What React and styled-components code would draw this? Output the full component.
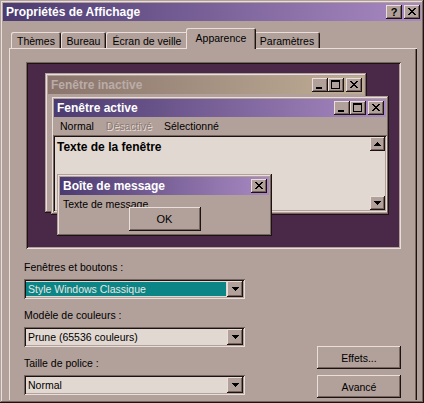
import React from 'react';
import styled, { createGlobalStyle } from 'styled-components';

const C = {
  face: '#b2a19b',
  hi: '#e9ded9',
  sh: '#75655f',
  dk: '#1c1212',
  win: '#e2d8d2',
  desk: '#4a2848',
  teal: '#0b8585',
};

const Global = createGlobalStyle`
  html, body { margin: 0; padding: 0; background: ${C.face}; overflow: hidden; }
  body { font-family: "Liberation Sans", Arial, sans-serif; font-size: 10.5px; color: #000; }
  * { box-sizing: border-box; }
`;

const bevelOut = `box-shadow: inset -1px -1px ${C.dk}, inset 1px 1px ${C.hi}, inset -2px -2px ${C.sh};`;
const frameOut = `box-shadow: inset -1px -1px ${C.dk}, inset 1px 1px ${C.face}, inset -2px -2px ${C.sh}, inset 2px 2px ${C.hi};`;
const sunken = `box-shadow: inset 1px 1px ${C.sh}, inset -1px -1px ${C.hi}, inset 2px 2px ${C.dk}, inset -2px -2px ${C.face};`;

const Dialog = styled.div`
  width: 424px;
  height: 403px;
  background: ${C.face};
  ${frameOut}
  padding: 3px;
  display: flex;
  flex-direction: column;
  overflow: hidden;
`;

const TitleBar = styled.div`
  height: ${p => p.$h || 18}px;
  flex: none;
  display: flex;
  align-items: center;
  padding: 0 ${p => p.$pr ?? 2}px 0 3px;
  background: ${p => p.$inactive
    ? 'linear-gradient(to right, #8a746c, #bfae96)'
    : 'linear-gradient(to right, #4b3b70, #a989c2)'};
  color: ${p => p.$inactive ? '#baaca8' : '#fff'};
  font-weight: bold;
  font-size: 12px;
  white-space: nowrap;
`;

const TitleText = styled.span`
  flex: 1;
  overflow: hidden;
`;

const CapBtn = styled.div`
  width: 16px;
  height: 14px;
  flex: none;
  background: ${C.face};
  ${bevelOut}
  margin-left: ${p => p.$gap || 0}px;
  display: flex;
  align-items: center;
  justify-content: center;
  color: #000;
  font-size: 11px;
  font-weight: bold;
  line-height: 1;
  svg { display: block; }
`;

const Glyph = ({ kind }) => {
  if (kind === 'min')
    return (
      <svg width="16" height="14" shapeRendering="crispEdges">
        <rect x="4" y="9" width="6" height="2" fill="#000" />
      </svg>
    );
  if (kind === 'max')
    return (
      <svg width="16" height="14" shapeRendering="crispEdges">
        <rect x="3.5" y="2.5" width="8" height="8" fill="none" stroke="#000" />
        <rect x="3" y="2" width="9" height="2" fill="#000" />
      </svg>
    );
  if (kind === 'close')
    return (
      <svg width="16" height="14" shapeRendering="crispEdges">
        <path d="M4 3h2v1h-2zM10 3h2v1h-2zM5 4h2v1h-2zM9 4h2v1h-2zM6 5h4v1h-4zM7 6h2v1h-2zM6 7h4v1h-4zM5 8h2v1h-2zM9 8h2v1h-2zM4 9h2v1h-2zM10 9h2v1h-2z" fill="#000" />
      </svg>
    );
  return null;
};

const Arrow = ({ up }) => (
  <svg width="7" height="4" shapeRendering="crispEdges">
    {up ? (
      <path d="M3 0h1v1h-1zM2 1h3v1h-3zM1 2h5v1h-5zM0 3h7v1h-7z" fill="#000" />
    ) : (
      <path d="M0 0h7v1h-7zM1 1h5v1h-5zM2 2h3v1h-3zM3 3h1v1h-1z" fill="#000" />
    )}
  </svg>
);

const Body = styled.div`
  flex: 1;
  display: flex;
  flex-direction: column;
  padding: 7px 4px 0 6px;
  min-height: 0;
`;

const TabRow = styled.div`
  display: flex;
  align-items: flex-end;
  height: 20px;
  padding-left: 2px;
  position: relative;
  z-index: 1;
`;

const Tab = styled.div`
  width: ${p => p.$w}px;
  height: ${p => (p.$active ? 21 : 16)}px;
  margin: ${p => (p.$active ? '0 -2px -1px -2px' : '0')};
  background: ${C.face};
  border-top-left-radius: 2px;
  border-top-right-radius: 2px;
  box-shadow: inset 1px 1px ${C.hi}, inset -1px 0 ${C.dk}, inset -2px 0 ${C.sh};
  display: flex;
  align-items: ${p => (p.$active ? 'flex-start' : 'center')};
  padding-top: ${p => (p.$active ? 4 : 1)}px;
  justify-content: center;
  white-space: nowrap;
  position: relative;
  z-index: ${p => (p.$active ? 2 : 1)};
`;

const Panel = styled.div`
  flex: 1;
  background: ${C.face};
  box-shadow: inset 1px 1px ${C.hi}, inset -1px 0 ${C.dk}, inset -2px 0 ${C.sh};
  padding: 14px 16px 0 15px;
  display: flex;
  flex-direction: column;
`;

const Preview = styled.div`
  height: 187px;
  margin: 0 0 0 2px;
  background: ${C.desk};
  ${sunken}
  position: relative;
  overflow: hidden;
`;

const Win = styled.div`
  position: absolute;
  left: ${p => p.$x}px;
  top: ${p => p.$y}px;
  width: ${p => p.$w}px;
  height: ${p => p.$h}px;
  background: ${C.face};
  ${frameOut}
  padding: 3px;
  display: flex;
  flex-direction: column;
`;

const MenuRow = styled.div`
  height: 18px;
  display: flex;
  align-items: center;
  flex: none;
`;

const MenuItem = styled.span`
  padding: 0 6px;
  color: ${p => (p.$disabled ? '#8a7a74' : '#000')};
  text-shadow: ${p => (p.$disabled ? `1px 1px ${C.hi}` : 'none')};
`;

const TextArea = styled.div`
  flex: 1;
  margin: 0 -1px;
  background: ${C.win};
  ${sunken}
  padding: 5px 4px;
  display: flex;
  font-weight: bold;
  font-size: 12px;
`;

const TextContent = styled.div`
  flex: 1;
`;

const ScrollBar = styled.div`
  width: 15px;
  display: flex;
  flex-direction: column;
  justify-content: space-between;
  margin: -3px -2px -3px 0;
`;

const ScrollBtn = styled.div`
  width: 15px;
  height: 14px;
  background: ${C.face};
  ${bevelOut}
  display: flex;
  align-items: center;
  justify-content: center;
`;

const MsgBody = styled.div`
  flex: 1;
  display: flex;
  flex-direction: column;
  padding: 3px 3px 0 3px;
`;

const MsgText = styled.div`
  height: 12px;
  line-height: 12px;
  white-space: nowrap;
`;

const PushBtn = styled.div`
  width: ${p => p.$w}px;
  height: ${p => p.$h}px;
  background: ${C.face};
  ${bevelOut}
  display: flex;
  align-items: center;
  justify-content: center;
  font-size: ${p => p.$fs || 10.5}px;
  position: relative;
  align-self: ${p => p.$center ? 'center' : 'auto'};
  margin-top: ${p => p.$mt || 0}px;
`;

const Form = styled.div`
  display: flex;
  justify-content: space-between;
  margin-top: 12px;
`;

const FieldCol = styled.div`
  width: 221px;
  display: flex;
  flex-direction: column;
`;

const Label = styled.div`
  height: 13px;
  line-height: 13px;
  margin-top: ${p => (p.$first ? 0 : 10)}px;
  margin-bottom: 5px;
`;

const Combo = styled.div`
  height: 20px;
  background: ${C.win};
  ${sunken}
  padding: 2px;
  display: flex;
`;

const ComboValue = styled.div`
  flex: 1;
  margin: 1px 1px 1px 0;
  padding-left: 2px;
  background: ${p => (p.$selected ? C.teal : 'transparent')};
  color: ${p => (p.$selected ? '#ece4e0' : '#000')};
  display: flex;
  align-items: center;
  white-space: nowrap;
`;

const DropBtn = styled.div`
  width: 16px;
  background: ${C.face};
  ${bevelOut}
  display: flex;
  align-items: center;
  justify-content: center;
`;

const BtnCol = styled.div`
  display: flex;
  flex-direction: column;
  gap: 6px;
  align-self: flex-end;
  margin-bottom: -3px;
`;

const Field = ({ label, value, selected, first }) => (
  <>
    <Label $first={first}>{label}</Label>
    <Combo>
      <ComboValue $selected={selected}>{value}</ComboValue>
      <DropBtn><Arrow /></DropBtn>
    </Combo>
  </>
);

export default function App() {
  return (
    <>
      <Global />
      <Dialog>
        <TitleBar $pr={1}>
          <TitleText>Propriétés de Affichage</TitleText>
          <CapBtn>?</CapBtn>
          <CapBtn $gap={2}><Glyph kind="close" /></CapBtn>
        </TitleBar>
        <Body>
          <TabRow>
            <Tab $w={50}>Thèmes</Tab>
            <Tab $w={45}>Bureau</Tab>
            <Tab $w={82}>Écran de veille</Tab>
            <Tab $w={70} $active>Apparence</Tab>
            <Tab $w={66}>Paramètres</Tab>
          </TabRow>
          <Panel>
            <Preview>
              <Win $x={19} $y={11} $w={322} $h={140}>
                <TitleBar $inactive>
                  <TitleText>Fenêtre inactive</TitleText>
                  <CapBtn><Glyph kind="min" /></CapBtn>
                  <CapBtn><Glyph kind="max" /></CapBtn>
                  <CapBtn $gap={2}><Glyph kind="close" /></CapBtn>
                </TitleBar>
              </Win>
              <Win $x={25} $y={34} $w={338} $h={119}>
                <TitleBar>
                  <TitleText>Fenêtre active</TitleText>
                  <CapBtn><Glyph kind="min" /></CapBtn>
                  <CapBtn><Glyph kind="max" /></CapBtn>
                  <CapBtn $gap={2}><Glyph kind="close" /></CapBtn>
                </TitleBar>
                <MenuRow>
                  <MenuItem>Normal</MenuItem>
                  <MenuItem $disabled>Désactivé</MenuItem>
                  <MenuItem>Sélectionné</MenuItem>
                </MenuRow>
                <TextArea>
                  <TextContent>Texte de la fenêtre</TextContent>
                  <ScrollBar>
                    <ScrollBtn><Arrow up /></ScrollBtn>
                    <ScrollBtn><Arrow /></ScrollBtn>
                  </ScrollBar>
                </TextArea>
              </Win>
              <Win $x={31} $y={112} $w={215} $h={62}>
                <TitleBar>
                  <TitleText>Boîte de message</TitleText>
                  <CapBtn><Glyph kind="close" /></CapBtn>
                </TitleBar>
                <MsgBody>
                  <MsgText>Texte de message</MsgText>
                  <PushBtn $w={72} $h={24} $center $mt={-3} $fs={11}>OK</PushBtn>
                </MsgBody>
              </Win>
            </Preview>
            <Form>
              <FieldCol>
                <Field first label="Fenêtres et boutons :" value="Style Windows Classique" selected />
                <Field label="Modèle de couleurs :" value="Prune (65536 couleurs)" />
                <Field label="Taille de police :" value="Normal" />
              </FieldCol>
              <BtnCol>
                <PushBtn $w={84} $h={23}>Effets...</PushBtn>
                <PushBtn $w={84} $h={23}>Avancé</PushBtn>
              </BtnCol>
            </Form>
          </Panel>
        </Body>
      </Dialog>
    </>
  );
}
